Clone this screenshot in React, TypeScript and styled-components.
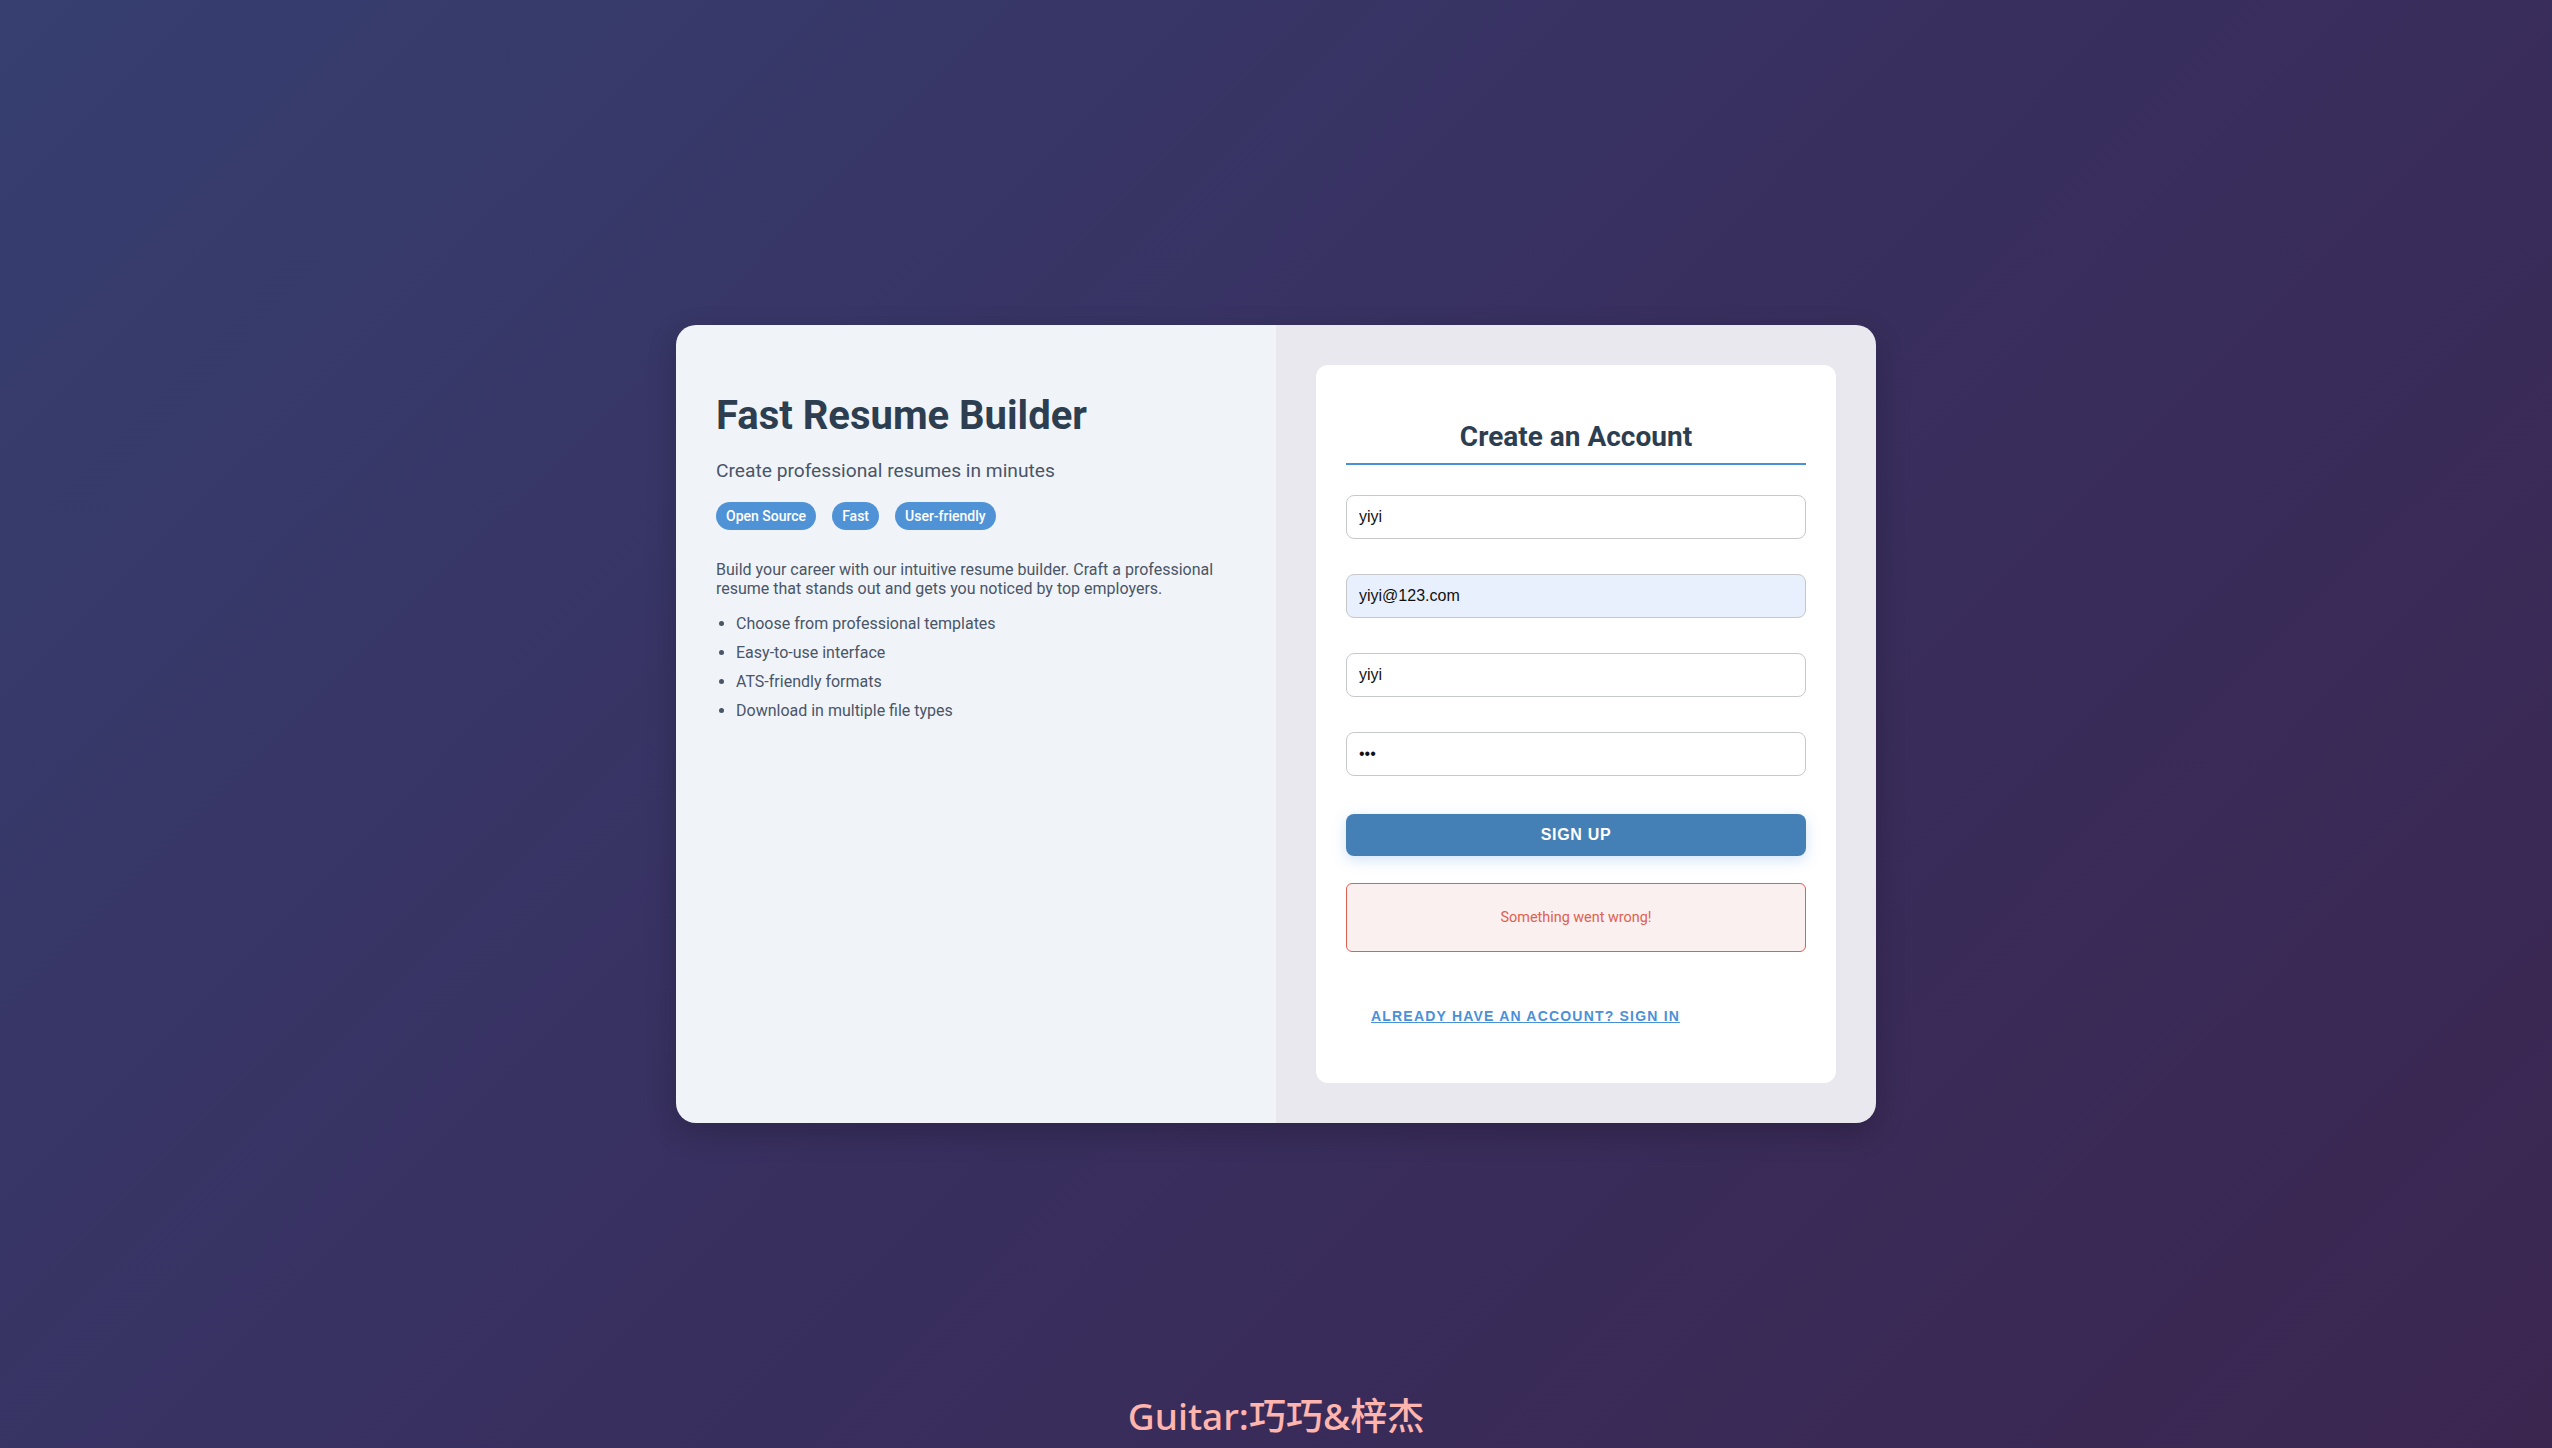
import styled, { createGlobalStyle } from "styled-components";

const GlobalStyle = createGlobalStyle`
    body {
        margin: 0;
        font-family: Roboto, "Noto Sans", sans-serif;
    }
`;

const features = [
    "Choose from professional templates",
    "Easy-to-use interface",
    "ATS-friendly formats",
    "Download in multiple file types",
];

const tags = ["Open Source", "Fast", "User-friendly"];

function App() {
    return (
        <>
        <GlobalStyle />
        <Page>
            <Card>
                <InfoPanel>
                    <Title>Fast Resume Builder</Title>
                    <Subtitle>Create professional resumes in minutes</Subtitle>
                    <TagRow>
                        {tags.map((tag) => (
                            <Tag key={tag}>{tag}</Tag>
                        ))}
                    </TagRow>
                    <Description>
                        Build your career with our intuitive resume builder. Craft a professional
                        resume that stands out and gets you noticed by top employers.
                    </Description>
                    <FeatureList>
                        {features.map((item) => (
                            <li key={item}>{item}</li>
                        ))}
                    </FeatureList>
                </InfoPanel>

                <FormPanel>
                    <FormCard>
                        <FormTitle>Create an Account</FormTitle>
                        <Fields>
                            <Input type="text" defaultValue="yiyi" />
                            <Input type="email" defaultValue="yiyi@123.com" $autofilled />
                            <Input type="text" defaultValue="yiyi" />
                            <Input type="password" defaultValue="abc" />
                        </Fields>
                        <SubmitButton>Sign Up</SubmitButton>
                        <ErrorBox>Something went wrong!</ErrorBox>
                        <LinkRow>
                            <SignInLink href="#">Already have an account? Sign In</SignInLink>
                        </LinkRow>
                    </FormCard>
                </FormPanel>
            </Card>
            <Watermark>Guitar:巧巧&amp;梓杰</Watermark>
        </Page>
        </>
    );
}

export default App;

const Page = styled.div`
    position: relative;
    min-height: 100vh;
    display: flex;
    align-items: center;
    justify-content: center;
    background: linear-gradient(135deg, #363f70 0%, #382f5f 50%, #3b2650 100%);
`;

const Card = styled.div`
    width: 1200px;
    display: grid;
    grid-template-columns: 1fr 1fr;
    border-radius: 20px;
    overflow: hidden;
    box-shadow: 0 10px 30px rgba(0, 0, 0, 0.2);
`;

const InfoPanel = styled.div`
    background-color: #f0f4f8;
    padding: 40px;
    color: #4a5568;
`;

const Title = styled.h1`
    margin: 27px 0 20px;
    font-size: 40px;
    font-weight: 700;
    color: #2c3e50;
`;

const Subtitle = styled.p`
    margin: 0 0 20px;
    font-size: 19.2px;
    color: #4a5568;
`;

const TagRow = styled.div`
    display: flex;
    gap: 16px;
    margin-bottom: 30px;
`;

const Tag = styled.span`
    background-color: #4f93d6;
    color: white;
    font-size: 14px;
    font-weight: 500;
    padding: 6px 10px;
    border-radius: 14px;
`;

const Description = styled.p`
    margin: 0 0 16px;
    font-size: 16px;
    color: #4a5568;
`;

const FeatureList = styled.ul`
    margin: 0;
    padding-left: 20px;
    font-size: 16px;
    color: #4a5568;

    li {
        margin-bottom: 10px;
    }
`;

const FormPanel = styled.div`
    background-color: #e9e8ee;
    padding: 40px;
`;

const FormCard = styled.div`
    background-color: white;
    border-radius: 12px;
    padding: 30px 30px 58px;
`;

const FormTitle = styled.h2`
    margin: 25px 0 30px;
    padding-bottom: 10px;
    border-bottom: 2px solid #4a90d9;
    text-align: center;
    font-size: 28px;
    font-weight: 700;
    color: #2c3e50;
`;

const Fields = styled.div`
    display: flex;
    flex-direction: column;
    gap: 35px;
`;

const Input = styled.input<{ $autofilled?: boolean }>`
    box-sizing: border-box;
    width: 100%;
    height: 44px;
    padding: 0 12px;
    border: 1px solid #c6c8cc;
    border-radius: 8px;
    font-family: "Liberation Sans", Arial, sans-serif;
    font-size: 16px;
    color: #111;
    background-color: ${({ $autofilled }) => ($autofilled ? "#e8f0fe" : "white")};
    outline: none;
`;

const SubmitButton = styled.button`
    width: 100%;
    height: 42px;
    margin-top: 38px;
    border: none;
    border-radius: 8px;
    background-color: #4480b6;
    color: white;
    font-family: "Liberation Sans", Arial, sans-serif;
    font-size: 16px;
    font-weight: 700;
    letter-spacing: 0.7px;
    text-transform: uppercase;
    cursor: pointer;
    box-shadow: 0 4px 14px rgba(74, 144, 226, 0.25);
`;

const ErrorBox = styled.div`
    box-sizing: border-box;
    height: 69px;
    margin-top: 27px;
    display: flex;
    align-items: center;
    justify-content: center;
    border: 1px solid #e0604f;
    border-radius: 6px;
    background-color: #fbf0f0;
    color: #e0604f;
    font-size: 14.4px;
`;

const LinkRow = styled.div`
    margin-top: 54px;
    padding-left: 25px;
`;

const SignInLink = styled.a`
    font-family: "Liberation Sans", Arial, sans-serif;
    font-size: 14px;
    font-weight: 700;
    letter-spacing: 1.2px;
    text-transform: uppercase;
    color: #4a90d9;
    text-decoration: underline;
`;

const Watermark = styled.div`
    position: absolute;
    bottom: 14px;
    left: 50%;
    transform: translateX(-50%);
    font-family: "Noto Sans", "Noto Sans CJK SC", sans-serif;
    font-size: 37px;
    font-weight: 500;
    line-height: 1;
    color: #ffb5ae;
    white-space: nowrap;
`;
